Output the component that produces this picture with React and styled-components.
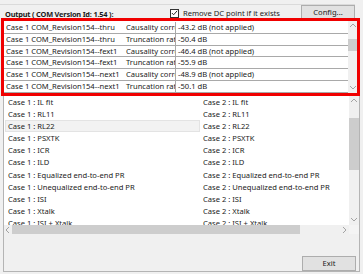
import React from "react";
import styled, { createGlobalStyle } from "styled-components";

const GlobalStyle = createGlobalStyle`
	html, body {
		margin: 0;
		padding: 0;
		background: #f0f0f0;
	}
	body {
		font-family: "Noto Sans", "Open Sans", sans-serif;
		font-size: 7.6px;
		color: #1b1b1b;
	}
`;

const results = [
	["Case 1 COM_Revision154--thru", "Causality correction", "-43.2 dB (not applied)"],
	["Case 1 COM_Revision154--thru", "Truncation ratio", "-50.4 dB"],
	["Case 1 COM_Revision154--fext1", "Causality correction", "-46.4 dB (not applied)"],
	["Case 1 COM_Revision154--fext1", "Truncation ratio", "-55.9 dB"],
	["Case 1 COM_Revision154--next1", "Causality correction", "-48.9 dB (not applied)"],
	["Case 1 COM_Revision154--next1", "Truncation ratio", "-50.1 dB"],
];

const plots = [
	"IL fit",
	"RL11",
	"RL22",
	"PSXTK",
	"ICR",
	"ILD",
	"Equalized end-to-end PR",
	"Unequalized end-to-end PR",
	"ISI",
	"Xtalk",
	"ISI + Xtalk",
];

function Arrow({ dir }) {
	const pts = {
		up: "1,5 4,2 7,5",
		down: "1,2 4,5 7,2",
		left: "5,1 2,4 5,7",
		right: "2,1 5,4 2,7",
	}[dir];
	return (
		<svg width="8" height="8" viewBox="0 0 8 8">
			<polyline points={pts} fill="none" stroke="#a3a3a3" strokeWidth="1" />
		</svg>
	);
}

export default function App() {
	return (
		<>
			<GlobalStyle />
			<Window>
				<TopStrip />
				<Header>
					<Title>Output ( COM Version Id: 1.54 ):</Title>
					<Check>
						<Box>
							<svg width="8" height="8" viewBox="0 0 8 8">
								<polyline points="1,4 3,6 7,1.5" fill="none" stroke="#222" strokeWidth="1.1" />
							</svg>
						</Box>
						Remove DC point if it exists
					</Check>
					<Button>Config...</Button>
				</Header>
				<Marked>
					<Grid>
						{results.map((r, i) => (
							<Row key={i}>
								<Cell width="120px">{r[0]}</Cell>
								<Cell width="52px" divider>
									{r[1]}
								</Cell>
								<Cell>{r[2]}</Cell>
							</Row>
						))}
					</Grid>
					<VScroll>
						<Arrow dir="up" />
						<Thumb top="9px" height="12px" />
						<Spacer />
						<Arrow dir="down" />
					</VScroll>
				</Marked>
				<Panel>
					<ListView>
						<ListBody>
							<Items>
								{plots.map((p, i) => (
									<Item key={i}>
										<FirstCol selected={i === 2}>Case 1 : {p}</FirstCol>
										<SecondCol>Case 2 : {p}</SecondCol>
									</Item>
								))}
							</Items>
							<VScroll wide>
								<Arrow dir="up" />
								<Thumb top="13px" height="52px" />
								<Spacer />
								<Arrow dir="down" />
							</VScroll>
						</ListBody>
						<HScroll>
							<Arrow dir="left" />
							<HThumb />
							<Spacer />
							<Arrow dir="right" />
							<Corner />
						</HScroll>
					</ListView>
					<Footer>
						<Button>Exit</Button>
					</Footer>
				</Panel>
			</Window>
		</>
	);
}

const Window = styled.div`
	width: 363px;
	height: 274px;
	overflow: hidden;
	display: flex;
	flex-direction: column;
`;

const TopStrip = styled.div`
	height: 4px;
	border-bottom: 1px solid #dadada;
	margin-right: 8px;
`;

const Header = styled.div`
	height: 13px;
	display: flex;
	align-items: flex-start;
	padding-left: 5px;
`;

const Title = styled.div`
	width: 165px;
	font-weight: 700;
	font-size: 7.4px;
	letter-spacing: -0.2px;
	padding-top: 4px;
	line-height: 10px;
	white-space: nowrap;
`;

const Check = styled.label`
	display: flex;
	align-items: center;
	gap: 4px;
	width: 131px;
	padding-top: 3px;
	line-height: 10px;
	white-space: nowrap;
`;

const Box = styled.span`
	width: 9px;
	height: 9px;
	box-sizing: border-box;
	border: 1px solid #333;
	background: #fff;
	display: flex;
	align-items: center;
	justify-content: center;
`;

const Button = styled.button`
	width: 54px;
	height: 15px;
	padding: 0;
	border: 1px solid #adadad;
	background: #e1e1e1;
	font: inherit;
	color: #1b1b1b;
	line-height: 13px;
`;

const Marked = styled.div`
	margin-left: 1px;
	width: 359px;
	height: 78px;
	box-sizing: border-box;
	border: 3px solid #f00000;
	display: flex;
	background: #fff;
`;

const Grid = styled.div`
	flex: 1;
	padding-top: 1px;
	display: flex;
	flex-direction: column;
`;

const Row = styled.div`
	height: 11.8px;
	box-sizing: border-box;
	display: flex;
	border-bottom: 1px solid #a9a9a9;
	background: #fff;
`;

const Cell = styled.div`
	width: ${(p) => p.width || "auto"};
	flex: ${(p) => (p.width ? "none" : "1")};
	padding-left: 2px;
	box-sizing: border-box;
	overflow: hidden;
	white-space: nowrap;
	line-height: 11px;
	border-right: ${(p) => (p.divider ? "1px solid #a9a9a9" : "none")};
`;

const VScroll = styled.div`
	width: ${(p) => (p.wide ? "10px" : "9px")};
	background: #f0f0f0;
	display: flex;
	flex-direction: column;
	align-items: center;
	padding: 1px 0;
	box-sizing: border-box;
`;

const Thumb = styled.div`
	width: 100%;
	margin-top: ${(p) => p.top};
	height: ${(p) => p.height};
	background: #cdcdcd;
`;

const Spacer = styled.div`
	flex: 1;
`;

const Panel = styled.div`
	margin-left: 3px;
	width: 357px;
	height: 176px;
	box-sizing: border-box;
	border: 1px solid #b4b4b4;
	border-top: none;
	display: flex;
	flex-direction: column;
`;

const ListView = styled.div`
	height: 138px;
	background: #fff;
	display: flex;
	flex-direction: column;
`;

const ListBody = styled.div`
	flex: 1;
	display: flex;
	overflow: hidden;
`;

const Items = styled.div`
	flex: 1;
	overflow: hidden;
	padding-left: 1px;
`;

const Item = styled.div`
	height: 12.1px;
	display: flex;
`;

const FirstCol = styled.div`
	width: 195px;
	flex: none;
	box-sizing: border-box;
	padding-left: 2px;
	line-height: 10.1px;
	white-space: nowrap;
	background: ${(p) => (p.selected ? "#f2f2f2" : "transparent")};
	border: 1px solid ${(p) => (p.selected ? "#e3e3e3" : "transparent")};
`;

const SecondCol = styled.div`
	padding-left: 3px;
	line-height: 12.1px;
	white-space: nowrap;
`;

const HScroll = styled.div`
	height: 9px;
	background: #f0f0f0;
	display: flex;
	align-items: center;
`;

const HThumb = styled.div`
	width: 288px;
	height: 100%;
	background: #cdcdcd;
`;

const Corner = styled.div`
	width: 10px;
	height: 100%;
	background: #f4f4f4;
`;

const Footer = styled.div`
	flex: 1;
	display: flex;
	justify-content: flex-end;
	align-items: flex-end;
	padding: 0 3px 0 0;
`;
